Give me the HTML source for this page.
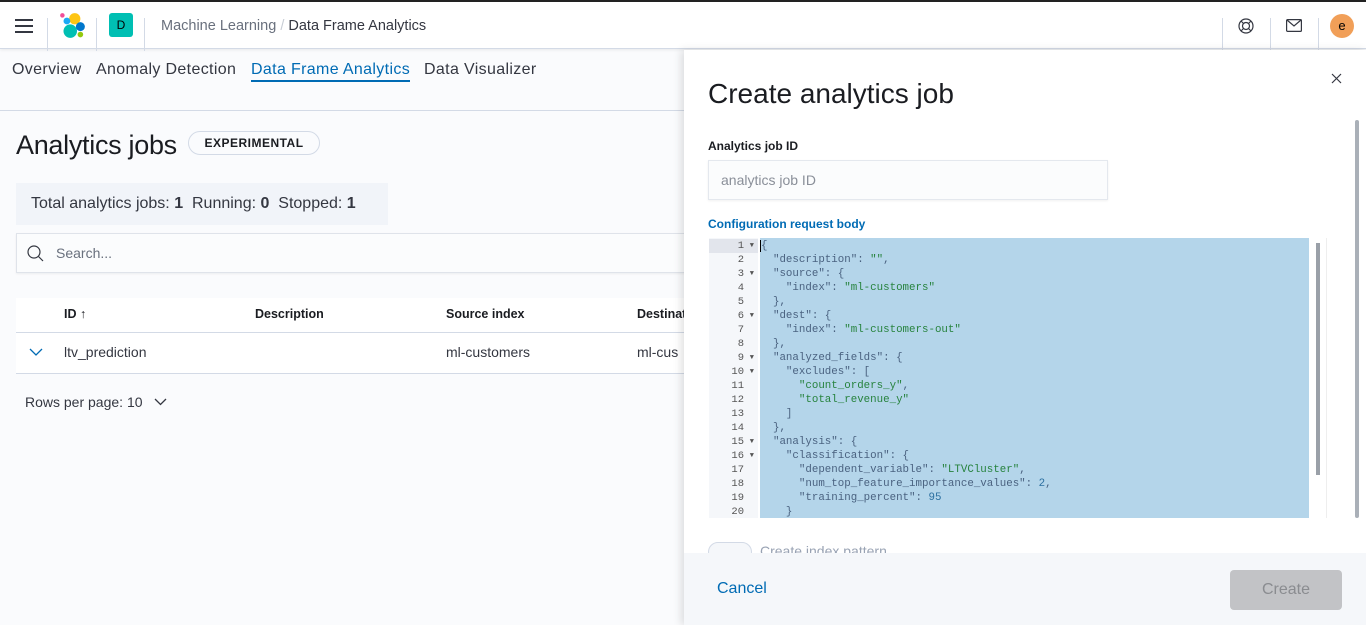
<!DOCTYPE html>
<html><head><meta charset="utf-8"><style>
*{box-sizing:border-box;margin:0;padding:0}
body{width:1366px;height:625px;overflow:hidden;background:#fafbfd;font-family:"Liberation Sans",sans-serif;color:#343741;position:relative}
.hdr{position:absolute;left:0;top:0;width:1366px;height:49px;background:#fff;border-top:2px solid #222;border-bottom:1px solid #d3dae6;box-shadow:0 1px 3px rgba(0,0,0,.08)}
.vl{position:absolute;top:16px;width:1px;height:33px;background:#d3dae6}
.abs{position:absolute;white-space:nowrap}
.tabs span{position:absolute;top:61px;font-size:16px;color:#343741;letter-spacing:.35px}
.panel{position:absolute;left:684px;top:50px;width:682px;height:575px;background:#fff;box-shadow:-3px 0 8px rgba(0,0,0,.12)}
.code{position:absolute;left:760px;top:238px;width:549px;height:280px;background:#b4d5ea;font-family:"Liberation Mono",monospace;font-size:10.8px;line-height:14px;padding-top:1px;white-space:pre;color:#4a6280;overflow:hidden}
.gut{position:absolute;left:709px;top:238px;width:49px;height:280px;background:#f5f7fa;font-family:"Liberation Mono",monospace;font-size:10.5px;line-height:14px;padding-top:1px;color:#555;text-align:right;white-space:pre}
.s{color:#27833e}
</style></head><body>
<div class="hdr">
<div class="abs" style="left:15px;top:17px;width:18px;height:2px;background:#343741;box-shadow:0 6px 0 #343741,0 12px 0 #343741"></div>
<div class="vl" style="left:47px"></div>
<svg class="abs" style="left:59px;top:10px" width="27" height="27" viewBox="0 0 24 24"><circle cx="14" cy="6" r="5" fill="#fec514"/><circle cx="7" cy="8" r="3" fill="#1ba9f5"/><circle cx="3" cy="3" r="2" fill="#f04e98"/><circle cx="10" cy="17" r="6" fill="#00bfb3"/><circle cx="19" cy="13" r="4" fill="#0077cc"/><circle cx="19" cy="20" r="2.5" fill="#93c90e"/></svg>
<div class="vl" style="left:96px"></div>
<div class="abs" style="left:109px;top:11px;width:24px;height:24px;background:#00bfb3;border-radius:3px;font-size:12px;text-align:center;line-height:24px;color:#000">D</div>
<div class="vl" style="left:144px"></div>
<div class="abs" style="left:161px;top:16px;font-size:14.5px;color:#69707d">Machine Learning <span style="color:#c8cdd5">/</span> <span style="color:#343741">Data Frame Analytics</span></div>
<div class="vl" style="left:1222px"></div><div class="vl" style="left:1270px"></div><div class="vl" style="left:1318px"></div>
<svg class="abs" style="left:1238px;top:16px" width="16" height="16" viewBox="0 0 16 16" fill="none" stroke="#343741" stroke-width="1.2"><circle cx="8" cy="8" r="7"/><circle cx="8" cy="8" r="3.5"/><path d="M3 3l2.5 2.5M13 3l-2.5 2.5M3 13l2.5-2.5M13 13l-2.5-2.5"/></svg>
<svg class="abs" style="left:1286px;top:17px" width="16" height="13" viewBox="0 0 16 13" fill="none" stroke="#343741" stroke-width="1.2"><rect x=".6" y=".6" width="14.8" height="11.8" rx="1"/><path d="M1 1l7 6 7-6"/></svg>
<div class="abs" style="left:1330px;top:12px;width:24px;height:24px;border-radius:50%;background:#f19f58;font-size:13px;text-align:center;line-height:23px;color:#000">e</div>
</div>
<div class="tabs">
<span style="left:12px">Overview</span><span style="left:96px">Anomaly Detection</span>
<span style="left:251px;color:#006bb4;border-bottom:2px solid #006bb4;padding-bottom:1px">Data Frame Analytics</span><span style="left:424px">Data Visualizer</span></div>
<div class="abs" style="left:0;top:110px;width:684px;height:1px;background:#d3dae6"></div>
<div class="abs" style="left:16px;top:130px;font-size:27px;color:#1a1c21;letter-spacing:-.3px">Analytics jobs</div>
<div class="abs" style="left:188px;top:131px;width:132px;height:24px;border:1px solid #d3dae6;border-radius:12px;font-size:12px;font-weight:bold;text-align:center;line-height:22px;letter-spacing:.5px;color:#1a1c21">EXPERIMENTAL</div>
<div class="abs" style="left:16px;top:183px;width:372px;height:42px;background:#f1f4f9;font-size:16px;line-height:42px;padding-left:15px">Total analytics jobs: <b>1</b>&nbsp; Running: <b>0</b>&nbsp; Stopped: <b>1</b></div>
<div class="abs" style="left:16px;top:233px;width:680px;height:40px;background:#fbfcfd;border:1px solid #dfe3ea;box-shadow:0 1px 2px rgba(0,0,0,.06)"></div>
<svg class="abs" style="left:27px;top:245px" width="17" height="17" viewBox="0 0 17 17" fill="none" stroke="#343741" stroke-width="1.2"><circle cx="7" cy="7" r="6"/><path d="M11.5 11.5l4.5 4.5"/></svg>
<div class="abs" style="left:56px;top:245px;font-size:14px;color:#69707d">Search...</div>
<div class="abs" style="left:16px;top:298px;width:670px;height:76px;background:#fff;border-bottom:1px solid #d3dae6"></div>
<div class="abs" style="left:16px;top:332px;width:670px;height:1px;background:#d3dae6"></div>
<div class="abs" style="left:64px;top:307px;font-size:12.5px;font-weight:bold;color:#1a1c21">ID ↑</div>
<div class="abs" style="left:255px;top:307px;font-size:12.5px;font-weight:bold;color:#1a1c21">Description</div>
<div class="abs" style="left:446px;top:307px;font-size:12.5px;font-weight:bold;color:#1a1c21">Source index</div>
<div class="abs" style="left:637px;top:307px;font-size:12.5px;font-weight:bold;color:#1a1c21">Destinat</div>
<svg class="abs" style="left:29px;top:348px" width="14" height="9" viewBox="0 0 14 9" fill="none" stroke="#006bb4" stroke-width="1.3"><path d="M1 1l6 6 6-6"/></svg>
<div class="abs" style="left:64px;top:344px;font-size:14px">ltv_prediction</div>
<div class="abs" style="left:446px;top:344px;font-size:14px">ml-customers</div>
<div class="abs" style="left:637px;top:344px;font-size:14px">ml-cus</div>
<div class="abs" style="left:25px;top:394px;font-size:14px">Rows per page: 10</div>
<svg class="abs" style="left:154px;top:398px" width="13" height="8" viewBox="0 0 13 8" fill="none" stroke="#343741" stroke-width="1.3"><path d="M1 1l5.5 5.5L12 1"/></svg>

<div class="panel"></div>
<div class="abs" style="left:708px;top:78px;font-size:28px;color:#1a1c21">Create analytics job</div>
<svg class="abs" style="left:1331px;top:73px" width="11" height="11" viewBox="0 0 11 11" stroke="#343741" stroke-width="1.2"><path d="M1 1l9 9M10 1l-9 9"/></svg>
<div class="abs" style="left:708px;top:139px;font-size:12px;font-weight:bold;color:#1a1c21">Analytics job ID</div>
<div class="abs" style="left:708px;top:160px;width:400px;height:40px;background:#fbfcfd;border:1px solid #e4e8ee;box-shadow:0 1px 2px rgba(0,0,0,.06);font-size:14px;line-height:38px;padding-left:12px;color:#8a8f99">analytics job ID</div>
<div class="abs" style="left:708px;top:217px;font-size:12px;font-weight:bold;color:#006bb4">Configuration request body</div>
<div class="gut"><div style="background:#e2e5ec;padding-right:14px;position:relative">1<span style="position:absolute;right:4px;font-size:7px">▼</span></div><div style="padding-right:14px;position:relative">2
3<span style="position:absolute;right:4px;font-size:7px;top:14px">▼</span>
4
5
6<span style="position:absolute;right:4px;font-size:7px;top:56px">▼</span>
7
8
9<span style="position:absolute;right:4px;font-size:7px;top:98px">▼</span>
10<span style="position:absolute;right:4px;font-size:7px;top:112px">▼</span>
11
12
13
14
15<span style="position:absolute;right:4px;font-size:7px;top:182px">▼</span>
16<span style="position:absolute;right:4px;font-size:7px;top:196px">▼</span>
17
18
19
20</div></div>
<div class="abs" style="left:1326px;top:238px;width:1px;height:280px;background:#eee"></div>
<div class="abs" style="left:1316px;top:243px;width:4px;height:232px;background:#9aa0a8"></div>
<div class="abs" style="left:1355px;top:120px;width:4px;height:398px;background:#aab0b8;border-radius:2px"></div>
<div class="code"><span style="border-left:1px solid #000">{</span>
  "description": <span class="s">""</span>,
  "source": {
    "index": <span class="s">"ml-customers"</span>
  },
  "dest": {
    "index": <span class="s">"ml-customers-out"</span>
  },
  "analyzed_fields": {
    "excludes": [
      <span class="s">"count_orders_y"</span>,
      <span class="s">"total_revenue_y"</span>
    ]
  },
  "analysis": {
    "classification": {
      "dependent_variable": <span class="s">"LTVCluster"</span>,
      "num_top_feature_importance_values": <span style="color:#2b6fa0">2</span>,
      "training_percent": <span style="color:#2b6fa0">95</span>
    }</div>
<div class="abs" style="left:708px;top:542px;width:44px;height:20px;border:1px solid #d3dae6;border-radius:10px;background:#f5f7fa"></div>
<div class="abs" style="left:760px;top:543px;font-size:14px;color:#98a2b3">Create index pattern</div>
<div class="abs" style="left:684px;top:553px;width:682px;height:72px;background:#f5f7fa"></div>
<div class="abs" style="left:717px;top:580px;font-size:16px;color:#006bb4">Cancel</div>
<div class="abs" style="left:1230px;top:570px;width:112px;height:40px;background:#c2c3c6;border-radius:4px;font-size:16px;text-align:center;line-height:40px;color:#8a8c90">Create</div>
</body></html>
